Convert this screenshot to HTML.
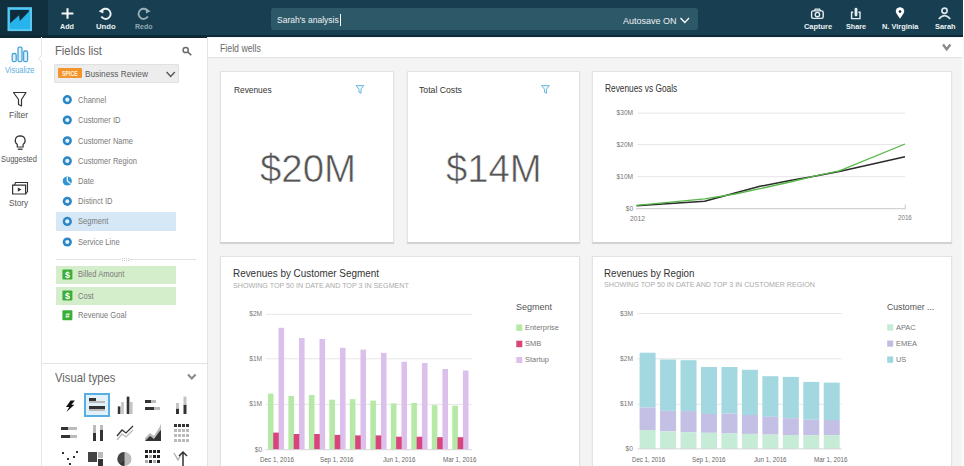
<!DOCTYPE html>
<html><head><meta charset="utf-8">
<style>
*{margin:0;padding:0;box-sizing:border-box}
html,body{width:964px;height:466px;overflow:hidden;background:#fff;font-family:"Liberation Sans",sans-serif}
.a{position:absolute;white-space:nowrap}
.b{position:absolute}
.card{position:absolute;background:#fff;border:1px solid #e3e3e3;border-bottom-color:#cfcfcf;box-shadow:0 1px 1px rgba(0,0,0,0.12)}
#t_n20,#t_n14{-webkit-text-stroke:0.6px #fff}
</style></head><body>
<!-- header -->
<div class="b" style="left:0;top:0;width:962.5px;height:34.5px;background:#173f51"></div>
<div class="b" style="left:0;top:34.5px;width:962.5px;height:3.4px;background:#0d2936"></div>
<div class="b" style="left:0;top:0;width:47.5px;height:34.5px;background:#10303f"></div>
<svg class="a" style="left:7px;top:6px" width="26" height="26" viewBox="0 0 26 26">
<rect x="1.5" y="2.2" width="22.5" height="21.9" fill="#27b3ec" stroke="#5cc8f0" stroke-width="2"/>
<polygon points="3.1,4.1 21.8,4.1 21.8,5.7 12.8,15.1 12.1,9.3 3.1,17.3" fill="#0e2c3b"/>
</svg>
<!-- add/undo/redo icons -->
<svg class="a" style="left:58px;top:5px" width="100" height="18" viewBox="58 5 100 18">
<path d="M67.5 8.2 V18.8 M61.6 13.5 H73.4" stroke="#f4f7f8" stroke-width="2.1" fill="none"/>
<path d="M101.2 11.2 A5.1 5.1 0 1 1 101.3 16.6" stroke="#eef2f4" stroke-width="1.9" fill="none"/>
<polygon points="98.6,11.3 103.6,8.2 103.2,13.6" fill="#eef2f4"/>
<g transform="translate(249.2 0) scale(-1 1)">
<path d="M101.2 11.2 A5.1 5.1 0 1 1 101.3 16.6" stroke="#9ab0b9" stroke-width="1.9" fill="none"/>
<polygon points="98.6,11.3 103.6,8.2 103.2,13.6" fill="#9ab0b9"/>
</g>
</svg>
<!-- title box -->
<div class="b" style="left:270.5px;top:8px;width:427.5px;height:22px;background:#2d5868;border-radius:3px"></div>
<div class="b" style="left:339.5px;top:14px;width:1px;height:12px;background:#fff"></div>
<svg class="a" style="left:679px;top:16px" width="12" height="9" viewBox="0 0 12 9">
<path d="M1.5 2 L5.8 6.5 L10 2" stroke="#fff" stroke-width="1.3" fill="none"/>
</svg>
<!-- right header icons -->
<svg class="a" style="left:800px;top:4px" width="160" height="18" viewBox="800 4 160 18">
<!-- capture -->
<rect x="811.6" y="10.9" width="11.6" height="7.5" rx="1.6" stroke="#e6edf0" stroke-width="1.4" fill="none"/>
<path d="M814.3 10.9 L815.3 9.2 H819.6 L820.6 10.9" stroke="#e6edf0" stroke-width="1.3" fill="none"/>
<circle cx="817.4" cy="14.6" r="2.2" stroke="#e6edf0" stroke-width="1.4" fill="none"/>
<!-- share -->
<path d="M853.2 12.3 H851.6 V18.6 H860 V12.3 H858.4" stroke="#e6edf0" stroke-width="1.4" fill="none"/>
<rect x="854.6" y="7.8" width="2.8" height="8.6" rx="1.4" fill="#e6edf0"/>
<!-- pin -->
<path d="M900 18.7 L896.5 13.6 A4.1 4.1 0 1 1 903.5 13.6 Z" fill="#fff"/>
<circle cx="900" cy="11.6" r="1.3" fill="#112f3e"/>
<!-- user -->
<circle cx="944.5" cy="10.8" r="2.6" stroke="#dbe4e8" stroke-width="1.7" fill="none"/>
<path d="M938.9 19 Q944.5 12.2 950.2 19" stroke="#dbe4e8" stroke-width="1.7" fill="none"/>
</svg>

<!-- left icon bar -->
<div class="b" style="left:41px;top:37px;width:1px;height:429px;background:#e6e6e6"></div>
<svg class="a" style="left:0;top:40px" width="44" height="170" viewBox="0 40 44 170">
<!-- visualize bars -->
<g stroke="#4aa3d8" stroke-width="1.3" fill="#dff0fa">
<rect x="12.2" y="53.5" width="4" height="8.2" rx="1.5"/>
<rect x="18" y="47.2" width="4" height="14.5" rx="1.5"/>
<rect x="23.6" y="51" width="4" height="10.7" rx="1.5"/>
</g>
<path d="M42 55 L38.5 58.5 L42 62" stroke="#ddd" stroke-width="1" fill="#fff"/>
<!-- filter -->
<path d="M13.5 92.5 H26 L21.5 99.5 V106 L18.5 104.5 V99.5 Z" stroke="#333" stroke-width="1.2" fill="none" stroke-linejoin="round"/>
<!-- bulb -->
<path d="M17.3 147 V144.5 C14 142 14.6 136 20.2 135.8 C25.8 136 26.4 142 23.1 144.5 V147 Z" stroke="#333" stroke-width="1.2" fill="none"/>
<path d="M17.8 149.2 H22.6" stroke="#333" stroke-width="1.3"/>
<!-- story -->
<path d="M12.6 185.2 H25.6 V194 H12.6 Z" stroke="#333" stroke-width="1.2" fill="none"/>
<path d="M14.5 185.2 L15.5 182.5 H27.5 V191.5 L25.6 194" stroke="#333" stroke-width="1.1" fill="none"/>
<path d="M17.8 187.5 L21.5 189.6 L17.8 191.7 Z" fill="#333"/>
</svg>

<!-- fields panel -->
<div class="b" style="left:207px;top:37px;width:1px;height:429px;background:#e3e3e3"></div>
<svg class="a" style="left:180px;top:45px" width="14" height="12" viewBox="180 45 14 12">
<circle cx="185.7" cy="50" r="2.6" stroke="#6a6a6a" stroke-width="1.5" fill="none"/>
<path d="M187.7 52 L191.3 55.2" stroke="#6a6a6a" stroke-width="1.6"/>
</svg>
<div class="b" style="left:53.5px;top:64px;width:125px;height:18.7px;background:#ededed;border:1px solid #e0e0e0;border-radius:1px"></div>
<div class="b" style="left:57.9px;top:67.9px;width:24.5px;height:10.3px;background:#f3952a;border-radius:1px"></div>
<span class="a" style="left:62px;top:69.6px;font-size:6.3px;line-height:7px;font-weight:bold;color:#fff3e0;transform:scaleX(0.83);transform-origin:left top">SPICE</span>
<svg class="a" style="left:164px;top:69px" width="14" height="10" viewBox="164 69 14 10">
<path d="M166.6 72 L170.7 76.4 L174.8 72" stroke="#5a5a5a" stroke-width="1.5" fill="none"/>
</svg>
<!-- highlight rows -->
<div class="b" style="left:55.7px;top:212.3px;width:120.3px;height:18.7px;background:#d6e8f6"></div>
<div class="b" style="left:55.7px;top:265.5px;width:120.6px;height:18px;background:#d4eecb"></div>
<div class="b" style="left:55.7px;top:286.6px;width:120.6px;height:18px;background:#d4eecb"></div>
<!-- field icons -->
<svg class="a" style="left:58px;top:90px" width="20" height="232" viewBox="58 90 20 232">
<g fill="#2b86c6">
<circle cx="67.3" cy="99.7" r="4.6"/><circle cx="67.3" cy="120" r="4.6"/><circle cx="67.3" cy="140.8" r="4.6"/>
<circle cx="67.3" cy="160.9" r="4.6"/><circle cx="67.3" cy="201.3" r="4.6"/>
<circle cx="67.3" cy="221.4" r="4.6"/><circle cx="67.3" cy="242" r="4.6"/>
</g>
<g fill="#e4f4fd">
<circle cx="67.3" cy="99.7" r="2.1"/><circle cx="67.3" cy="120" r="2.1"/><circle cx="67.3" cy="140.8" r="2.1"/>
<circle cx="67.3" cy="160.9" r="2.1"/><circle cx="67.3" cy="201.3" r="2"/>
<circle cx="67.3" cy="221.4" r="2.1"/><circle cx="67.3" cy="242" r="2.1"/>
</g>
<circle cx="67.3" cy="181" r="4.6" fill="#3194d3"/>
<path d="M67.3 181 V176.8 M67.3 181 L70.5 183.5" stroke="#fff" stroke-width="1.2"/>
<g fill="#3cae37">
<rect x="62.4" y="269.5" width="10" height="10" rx="1"/>
<rect x="62.4" y="290.6" width="10" height="10" rx="1"/>
<rect x="62.4" y="310.2" width="10" height="10" rx="1"/>
</g>
<text x="67.4" y="277.8" font-size="9" font-weight="bold" fill="#fff" text-anchor="middle" font-family="Liberation Sans">$</text>
<text x="67.4" y="298.9" font-size="9" font-weight="bold" fill="#fff" text-anchor="middle" font-family="Liberation Sans">$</text>
<text x="67.4" y="318.3" font-size="8" font-weight="bold" fill="#fff" text-anchor="middle" font-family="Liberation Sans">#</text>
</svg>
<!-- dashed separator -->
<div class="b" style="left:55.7px;top:259.3px;width:140px;height:1px;background:#e2e2e2"></div>
<div class="b" style="left:121px;top:257px;width:8px;height:5px;background:#fff"></div>
<div class="b" style="left:121.5px;top:257.5px;width:7px;height:1px;border-top:1px dotted #c8c8c8"></div>
<div class="b" style="left:121.5px;top:260px;width:7px;height:1px;border-top:1px dotted #c8c8c8"></div>
<!-- visual types separator -->
<div class="b" style="left:42px;top:363px;width:165px;height:1px;background:#e3e3e3"></div>
<svg class="a" style="left:186px;top:372px" width="12" height="10" viewBox="186 372 12 10">
<path d="M188 374.5 L191.8 378.5 L195.6 374.5" stroke="#888" stroke-width="2" fill="none"/>
</svg>
<!-- visual types icons -->
<div class="b" style="left:84px;top:392.6px;width:26.2px;height:24.8px;border:2px solid #56aee2;background:#e2f0f9"></div>
<svg class="a" style="left:55px;top:390px" width="145" height="76" viewBox="55 390 145 76">
<!-- row1 -->
<path d="M70.6 400.6 H74.9 L71.4 404.8 H74.4 L66.4 412 L69.2 406.9 H66 Z" fill="#111"/>
<rect x="89" y="398" width="7" height="3" fill="#333"/><rect x="89" y="401" width="16" height="2" fill="#bbb"/>
<rect x="89" y="406" width="16" height="3" fill="#333"/><rect x="89" y="409" width="16" height="2" fill="#bbb"/>
<rect x="117.8" y="406.4" width="2.6" height="7.6" fill="#333"/><rect x="121.2" y="402" width="2.6" height="12" fill="#c4c4c4"/><rect x="126.7" y="396.6" width="2.7" height="17.4" fill="#333"/><rect x="130" y="402" width="2.6" height="12" fill="#c4c4c4"/>
<rect x="145" y="400" width="6" height="3" fill="#333"/><rect x="151" y="400" width="5" height="3" fill="#bbb"/>
<rect x="145" y="407" width="9" height="3" fill="#333"/><rect x="154" y="407" width="6" height="3" fill="#bbb"/>
<rect x="176" y="408.5" width="3" height="5.5" fill="#333"/><rect x="176" y="403" width="3" height="5.5" fill="#c4c4c4"/>
<rect x="183.5" y="404.6" width="3" height="9.4" fill="#333"/><rect x="183.5" y="396.6" width="3" height="8" fill="#c4c4c4"/>
<!-- row2 -->
<rect x="61" y="427" width="7" height="3" fill="#333"/><rect x="68" y="427" width="9" height="3" fill="#bbb"/>
<rect x="61" y="435" width="9" height="3" fill="#333"/><rect x="70" y="435" width="7" height="3" fill="#bbb"/>
<rect x="93" y="433" width="3" height="8" fill="#333"/><rect x="93" y="425" width="3" height="8" fill="#bbb"/>
<rect x="100" y="430" width="3" height="11" fill="#333"/><rect x="100" y="425" width="3" height="5" fill="#bbb"/>
<path d="M117 436 L122 430 L126 433 L133 426" stroke="#333" stroke-width="1.3" fill="none"/>
<path d="M117 440 L122 434 L126 437 L133 430" stroke="#bbb" stroke-width="1.3" fill="none"/>
<path d="M145 441 L145 438 L150 433 L154 436 L159 428 L161 424 L161 441 Z" fill="#bbb"/>
<path d="M145 441 L150 436 L154 439 L159 432 L161 430 L161 441 Z" fill="#333"/>
<g fill="#333"><rect x="174" y="424" width="3" height="3"/><rect x="178" y="424" width="3" height="3"/><rect x="182" y="424" width="3" height="3"/><rect x="186" y="424" width="3" height="3"/></g>
<g fill="#bbb"><rect x="174" y="429" width="3" height="3"/><rect x="178" y="429" width="3" height="3"/><rect x="182" y="429" width="3" height="3"/><rect x="186" y="429" width="3" height="3"/>
<rect x="174" y="434" width="3" height="3"/><rect x="178" y="434" width="3" height="3"/><rect x="182" y="434" width="3" height="3"/><rect x="186" y="434" width="3" height="3"/>
<rect x="174" y="439" width="3" height="3"/><rect x="178" y="439" width="3" height="3"/><rect x="182" y="439" width="3" height="3"/><rect x="186" y="439" width="3" height="3"/></g>
<!-- row3 -->
<g fill="#333"><rect x="62" y="452" width="2" height="2"/><rect x="67" y="458" width="2" height="2"/><rect x="73" y="456" width="2" height="2"/><rect x="76" y="451" width="2" height="2"/><rect x="69" y="463" width="2" height="2"/></g>
<rect x="88" y="452" width="9" height="10" fill="#444"/><rect x="98" y="452" width="5" height="6" fill="#bbb"/><rect x="98" y="459" width="5" height="7" fill="#333"/>
<circle cx="124.5" cy="459" r="7" fill="#bbb"/><path d="M124.5 459 V452 A7 7 0 0 0 119 463.4 Z" fill="#444"/><path d="M124.5 459 L119 463.4 A7 7 0 0 0 124.5 466 Z" fill="#333"/>
<g fill="#222"><rect x="145" y="450" width="3" height="3"/><rect x="149" y="450" width="3" height="3"/><rect x="153" y="450" width="3" height="3"/><rect x="157" y="450" width="3" height="3"/>
<rect x="145" y="455" width="3" height="3"/><rect x="153" y="455" width="3" height="3"/><rect x="157" y="455" width="3" height="3"/>
<rect x="149" y="460" width="3" height="3"/><rect x="157" y="460" width="3" height="3"/></g>
<g fill="#aaa"><rect x="149" y="455" width="3" height="3"/><rect x="145" y="460" width="3" height="3"/><rect x="153" y="460" width="3" height="3"/></g>
<path d="M174 453 L178 460 L182 453" stroke="#aaa" stroke-width="1.2" fill="none"/>
<path d="M183 466 V452 M179 456 L183 452 L187 456" stroke="#333" stroke-width="1.5" fill="none"/>
</svg>

<!-- main area -->
<div class="b" style="left:208px;top:37px;width:753.5px;height:429px;background:#f4f4f4"></div>
<div class="b" style="left:961.5px;top:37px;width:3px;height:429px;background:#fbfbfb"></div>
<div class="b" style="left:208px;top:37.9px;width:753.5px;height:20px;background:#fff;border-bottom:1px solid #e3e3e3"></div>
<svg class="a" style="left:940px;top:42px" width="14" height="11" viewBox="940 42 14 11">
<path d="M943 44.5 L946.7 49.3 L950.4 44.5" stroke="#8a8a8a" stroke-width="2.4" fill="none"/>
</svg>
<div class="card" style="left:220px;top:70.8px;width:173.5px;height:172px"></div>
<div class="card" style="left:406.6px;top:70.8px;width:173.4px;height:172px"></div>
<div class="card" style="left:591.8px;top:70.8px;width:359.8px;height:172.5px"></div>
<div class="card" style="left:220px;top:255.8px;width:360.3px;height:220px"></div>
<div class="card" style="left:591.8px;top:255.8px;width:359.8px;height:220px"></div>
<!-- filter icons in cards -->
<svg class="a" style="left:354px;top:84px" width="12" height="11" viewBox="354 84 12 11">
<path d="M356 85.6 H363.8 L361 89.3 V93.3 L359 92.3 V89.3 Z" stroke="#6cb9e0" stroke-width="1" fill="#eef7fc"/>
</svg>
<svg class="a" style="left:540px;top:84px" width="12" height="11" viewBox="540 84 12 11">
<path d="M541.5 85.6 H549.3 L546.5 89.3 V93.3 L544.5 92.3 V89.3 Z" stroke="#6cb9e0" stroke-width="1" fill="#eef7fc"/>
</svg>
<!-- line chart -->
<svg class="a" style="left:592px;top:100px" width="330" height="125" viewBox="592 100 330 125">
<g stroke="#e6e6e6" stroke-width="1">
<path d="M637.5 113.2 H905 M637.5 144.6 H905 M637.5 176.7 H905"/>
</g>
<path d="M636 208.6 H905.3 V204.5" stroke="#d2d2d2" stroke-width="1.2" fill="none"/>
<polyline points="636.5,205.8 704.6,201.2 735,193 760,186.3 790,180.6 814.4,176.2 839.3,171.5 905,156.8" stroke="#2b2b2b" stroke-width="1.5" fill="none" stroke-linejoin="round"/>
<polyline points="636.5,205.4 704.6,198.9 735,194 760,188.7 790,182 814.4,176.2 839.3,170.8 905,144" stroke="#56b847" stroke-width="1.3" fill="none" stroke-linejoin="round"/>
</svg>
<!-- segment bar chart -->
<svg class="a" style="left:230px;top:300px" width="350" height="166" viewBox="230 300 350 166">
<g stroke="#e6e6e6" stroke-width="1"><path d="M265.6 314.3 H472 M265.6 358.8 H472 M265.6 404.4 H472"/></g>
<g id="segbars"><rect x="267.90" y="393.6" width="5.6" height="56.10" fill="#b5e9a5"/><rect x="278.50" y="327.8" width="5.6" height="121.90" fill="#dcc0ec"/><rect x="273.20" y="432.6" width="5.6" height="17.10" fill="#d8457c"/><rect x="288.39" y="396" width="5.6" height="53.70" fill="#b5e9a5"/><rect x="298.99" y="338" width="5.6" height="111.70" fill="#dcc0ec"/><rect x="293.69" y="434" width="5.6" height="15.70" fill="#d8457c"/><rect x="308.88" y="395" width="5.6" height="54.70" fill="#b5e9a5"/><rect x="319.48" y="339" width="5.6" height="110.70" fill="#dcc0ec"/><rect x="314.18" y="434" width="5.6" height="15.70" fill="#d8457c"/><rect x="329.37" y="399.7" width="5.6" height="50.00" fill="#b5e9a5"/><rect x="339.97" y="347.8" width="5.6" height="101.90" fill="#dcc0ec"/><rect x="334.67" y="434.9" width="5.6" height="14.80" fill="#d8457c"/><rect x="349.86" y="399.2" width="5.6" height="50.50" fill="#b5e9a5"/><rect x="360.46" y="349.6" width="5.6" height="100.10" fill="#dcc0ec"/><rect x="355.16" y="435.4" width="5.6" height="14.30" fill="#d8457c"/><rect x="370.35" y="400.6" width="5.6" height="49.10" fill="#b5e9a5"/><rect x="380.95" y="352.9" width="5.6" height="96.80" fill="#dcc0ec"/><rect x="375.65" y="435.4" width="5.6" height="14.30" fill="#d8457c"/><rect x="390.84" y="403.4" width="5.6" height="46.30" fill="#b5e9a5"/><rect x="401.44" y="361.7" width="5.6" height="88.00" fill="#dcc0ec"/><rect x="396.14" y="436.7" width="5.6" height="13.00" fill="#d8457c"/><rect x="411.33" y="403" width="5.6" height="46.70" fill="#b5e9a5"/><rect x="421.93" y="363" width="5.6" height="86.70" fill="#dcc0ec"/><rect x="416.63" y="436.7" width="5.6" height="13.00" fill="#d8457c"/><rect x="431.82" y="405.2" width="5.6" height="44.50" fill="#b5e9a5"/><rect x="442.42" y="369" width="5.6" height="80.70" fill="#dcc0ec"/><rect x="437.12" y="437.2" width="5.6" height="12.50" fill="#d8457c"/><rect x="452.31" y="405.7" width="5.6" height="44.00" fill="#b5e9a5"/><rect x="462.91" y="370.5" width="5.6" height="79.20" fill="#dcc0ec"/><rect x="457.61" y="437.2" width="5.6" height="12.50" fill="#d8457c"/></g>
<path d="M265.6 449.7 H472" stroke="#d6d6d6" stroke-width="1"/>
<rect x="516.3" y="324.4" width="6" height="6.5" fill="#b5e9a5"/>
<rect x="516.3" y="340.7" width="6" height="6.5" fill="#d8457c"/>
<rect x="516.3" y="357" width="6" height="6" fill="#dcc0ec"/>
</svg>
<!-- region bar chart -->
<svg class="a" style="left:600px;top:300px" width="350" height="166" viewBox="600 300 350 166">
<g stroke="#e6e6e6" stroke-width="1"><path d="M637.3 313.5 H841.5 M637.3 358.8 H841.5 M637.3 404.3 H841.5"/></g>
<g id="regbars"><rect x="639.60" y="352.7" width="16" height="54.80" fill="#a3d8e0"/><rect x="639.60" y="407.5" width="16" height="22.50" fill="#c4bfe4"/><rect x="639.60" y="430" width="16" height="18.90" fill="#c6ecd8"/><rect x="660.06" y="359.5" width="16" height="51.30" fill="#a3d8e0"/><rect x="660.06" y="410.8" width="16" height="20.60" fill="#c4bfe4"/><rect x="660.06" y="431.4" width="16" height="17.50" fill="#c6ecd8"/><rect x="680.52" y="360.2" width="16" height="50.90" fill="#a3d8e0"/><rect x="680.52" y="411.1" width="16" height="21.00" fill="#c4bfe4"/><rect x="680.52" y="432.1" width="16" height="16.80" fill="#c6ecd8"/><rect x="700.98" y="367" width="16" height="47.00" fill="#a3d8e0"/><rect x="700.98" y="414" width="16" height="18.80" fill="#c4bfe4"/><rect x="700.98" y="432.8" width="16" height="16.10" fill="#c6ecd8"/><rect x="721.44" y="367" width="16" height="46.60" fill="#a3d8e0"/><rect x="721.44" y="413.6" width="16" height="19.90" fill="#c4bfe4"/><rect x="721.44" y="433.5" width="16" height="15.40" fill="#c6ecd8"/><rect x="741.90" y="369.8" width="16" height="45.20" fill="#a3d8e0"/><rect x="741.90" y="415" width="16" height="18.90" fill="#c4bfe4"/><rect x="741.90" y="433.9" width="16" height="15.00" fill="#c6ecd8"/><rect x="762.36" y="376.2" width="16" height="40.60" fill="#a3d8e0"/><rect x="762.36" y="416.8" width="16" height="17.80" fill="#c4bfe4"/><rect x="762.36" y="434.6" width="16" height="14.30" fill="#c6ecd8"/><rect x="782.82" y="376.9" width="16" height="41.30" fill="#a3d8e0"/><rect x="782.82" y="418.2" width="16" height="16.80" fill="#c4bfe4"/><rect x="782.82" y="435" width="16" height="13.90" fill="#c6ecd8"/><rect x="803.28" y="381.9" width="16" height="37.80" fill="#a3d8e0"/><rect x="803.28" y="419.7" width="16" height="15.60" fill="#c4bfe4"/><rect x="803.28" y="435.3" width="16" height="13.60" fill="#c6ecd8"/><rect x="823.74" y="382.6" width="16" height="37.40" fill="#a3d8e0"/><rect x="823.74" y="420" width="16" height="15.30" fill="#c4bfe4"/><rect x="823.74" y="435.3" width="16" height="13.60" fill="#c6ecd8"/></g>
<path d="M637.3 448.9 H841.5" stroke="#d6d6d6" stroke-width="1"/>
<rect x="887.2" y="324.3" width="6" height="6.3" fill="#c3ebd5"/>
<rect x="887.2" y="340.6" width="6" height="6.1" fill="#c1bce2"/>
<rect x="887.2" y="356.5" width="6" height="6.3" fill="#9fd6df"/>
</svg>
<span class="a" id="t_add" style="top:23.03px;font-size:8.0px;line-height:8.0px;color:#eef2f4;font-weight:bold;left:59.90px;transform:scaleX(0.8980);transform-origin:left top;">Add</span>
<span class="a" id="t_undo" style="top:23.03px;font-size:8.0px;line-height:8.0px;color:#eef2f4;font-weight:bold;left:95.70px;transform:scaleX(0.9597);transform-origin:left top;">Undo</span>
<span class="a" id="t_redo" style="top:23.03px;font-size:8.0px;line-height:8.0px;color:#92a9b3;font-weight:bold;left:134.70px;transform:scaleX(0.8781);transform-origin:left top;">Redo</span>
<span class="a" id="t_title" style="top:15.07px;font-size:9.6px;line-height:9.6px;color:#eef2f4;left:276.70px;transform:scaleX(0.8867);transform-origin:left top;">Sarah's analysis</span>
<span class="a" id="t_autosave" style="top:15.60px;font-size:9.8px;line-height:9.8px;color:#eef2f4;left:623.10px;transform:scaleX(0.9186);transform-origin:left top;">Autosave ON</span>
<span class="a" id="t_capture" style="top:23.03px;font-size:8.0px;line-height:8.0px;color:#eef2f4;font-weight:bold;left:803.70px;transform:scaleX(0.9292);transform-origin:left top;">Capture</span>
<span class="a" id="t_share" style="top:23.03px;font-size:8.0px;line-height:8.0px;color:#eef2f4;font-weight:bold;left:845.70px;transform:scaleX(0.9030);transform-origin:left top;">Share</span>
<span class="a" id="t_nva" style="top:23.03px;font-size:8.0px;line-height:8.0px;color:#eef2f4;font-weight:bold;left:881.70px;transform:scaleX(0.9231);transform-origin:left top;">N. Virginia</span>
<span class="a" id="t_sarah" style="top:23.03px;font-size:8.0px;line-height:8.0px;color:#eef2f4;font-weight:bold;left:934.50px;transform:scaleX(0.9215);transform-origin:left top;">Sarah</span>
<span class="a" id="t_vis" style="top:67.36px;font-size:8.2px;line-height:8.2px;color:#5aaede;left:5.30px;transform:scaleX(0.9040);transform-origin:left top;">Visualize</span>
<span class="a" id="t_filt" style="top:111.86px;font-size:8.2px;line-height:8.2px;color:#555;left:8.90px;transform:scaleX(1.0486);transform-origin:left top;">Filter</span>
<span class="a" id="t_sugg" style="top:156.06px;font-size:8.2px;line-height:8.2px;color:#555;left:0.70px;transform:scaleX(0.9169);transform-origin:left top;">Suggested</span>
<span class="a" id="t_story" style="top:199.56px;font-size:8.2px;line-height:8.2px;color:#555;left:8.90px;transform:scaleX(0.9963);transform-origin:left top;">Story</span>
<span class="a" id="t_fl" style="top:44.63px;font-size:12.6px;line-height:12.6px;color:#666;left:54.50px;transform:scaleX(0.8936);transform-origin:left top;">Fields list</span>
<span class="a" id="t_br" style="top:68.90px;font-size:9.8px;line-height:9.8px;color:#5a5a5a;left:84.50px;transform:scaleX(0.8425);transform-origin:left top;">Business Review</span>
<span class="a" id="t_f0" style="top:95.62px;font-size:8.6px;line-height:8.6px;color:#7a7a7a;left:77.60px;transform:scaleX(0.8800);transform-origin:left top;">Channel</span>
<span class="a" id="t_f1" style="top:115.92px;font-size:8.6px;line-height:8.6px;color:#7a7a7a;left:77.60px;transform:scaleX(0.8800);transform-origin:left top;">Customer ID</span>
<span class="a" id="t_f2" style="top:136.72px;font-size:8.6px;line-height:8.6px;color:#7a7a7a;left:77.60px;transform:scaleX(0.8800);transform-origin:left top;">Customer Name</span>
<span class="a" id="t_f3" style="top:156.82px;font-size:8.6px;line-height:8.6px;color:#7a7a7a;left:77.60px;transform:scaleX(0.8800);transform-origin:left top;">Customer Region</span>
<span class="a" id="t_f4" style="top:176.92px;font-size:8.6px;line-height:8.6px;color:#7a7a7a;left:77.60px;transform:scaleX(0.8800);transform-origin:left top;">Date</span>
<span class="a" id="t_f5" style="top:197.22px;font-size:8.6px;line-height:8.6px;color:#7a7a7a;left:77.60px;transform:scaleX(0.8800);transform-origin:left top;">Distinct ID</span>
<span class="a" id="t_f6" style="top:217.32px;font-size:8.6px;line-height:8.6px;color:#7a7a7a;left:77.60px;transform:scaleX(0.8800);transform-origin:left top;">Segment</span>
<span class="a" id="t_f7" style="top:237.92px;font-size:8.6px;line-height:8.6px;color:#7a7a7a;left:77.60px;transform:scaleX(0.8800);transform-origin:left top;">Service Line</span>
<span class="a" id="t_f8" style="top:270.42px;font-size:8.6px;line-height:8.6px;color:#7a7a7a;left:77.60px;transform:scaleX(0.8800);transform-origin:left top;">Billed Amount</span>
<span class="a" id="t_f9" style="top:291.52px;font-size:8.6px;line-height:8.6px;color:#7a7a7a;left:77.60px;transform:scaleX(0.8800);transform-origin:left top;">Cost</span>
<span class="a" id="t_f10" style="top:311.12px;font-size:8.6px;line-height:8.6px;color:#7a7a7a;left:77.60px;transform:scaleX(0.8800);transform-origin:left top;">Revenue Goal</span>
<span class="a" id="t_vt" style="top:371.50px;font-size:12.4px;line-height:12.4px;color:#666;left:54.70px;transform:scaleX(0.9070);transform-origin:left top;">Visual types</span>
<span class="a" id="t_fwl" style="top:43.80px;font-size:10.4px;line-height:10.4px;color:#6a6a6a;left:219.50px;transform:scaleX(0.8431);transform-origin:left top;">Field wells</span>
<span class="a" id="t_rev" style="top:85.30px;font-size:9.8px;line-height:9.8px;color:#333;left:233.50px;transform:scaleX(0.8514);transform-origin:left top;">Revenues</span>
<span class="a" id="t_tc" style="top:85.30px;font-size:9.8px;line-height:9.8px;color:#333;left:418.90px;transform:scaleX(0.8850);transform-origin:left top;">Total Costs</span>
<span class="a" id="t_rvg" style="top:83.77px;font-size:10.2px;line-height:10.2px;color:#333;left:604.60px;transform:scaleX(0.8180);transform-origin:left top;">Revenues vs Goals</span>
<span class="a" id="t_n20" style="top:148.76px;font-size:39.5px;line-height:39.5px;color:#555;left:259.90px;transform:scaleX(0.9723);transform-origin:left top;">$20M</span>
<span class="a" id="t_n14" style="top:148.76px;font-size:39.5px;line-height:39.5px;color:#555;left:445.70px;transform:scaleX(0.9691);transform-origin:left top;">$14M</span>
<span class="a" id="t_rbs" style="top:267.82px;font-size:11.2px;line-height:11.2px;color:#333;left:233.00px;transform:scaleX(0.8859);transform-origin:left top;">Revenues by Customer Segment</span>
<span class="a" id="t_rbss" style="top:281.77px;font-size:7.6px;line-height:7.6px;color:#aaa;left:233.10px;transform:scaleX(0.9394);transform-origin:left top;">SHOWING TOP 50 IN DATE AND TOP 3 IN SEGMENT</span>
<span class="a" id="t_rbr" style="top:268.12px;font-size:11.2px;line-height:11.2px;color:#333;left:603.70px;transform:scaleX(0.8701);transform-origin:left top;">Revenues by Region</span>
<span class="a" id="t_rbrs" style="top:281.47px;font-size:7.6px;line-height:7.6px;color:#aaa;left:603.70px;transform:scaleX(0.9369);transform-origin:left top;">SHOWING TOP 50 IN DATE AND TOP 3 IN CUSTOMER REGION</span>
<span class="a" id="t_seg" style="top:301.64px;font-size:9.4px;line-height:9.4px;color:#555;left:515.80px;transform:scaleX(0.9625);transform-origin:left top;">Segment</span>
<span class="a" id="t_cust" style="top:301.64px;font-size:9.4px;line-height:9.4px;color:#555;left:887.10px;transform:scaleX(0.9262);transform-origin:left top;">Customer ...</span>
<span class="a" id="t_lg0" style="top:323.63px;font-size:8.0px;line-height:8.0px;color:#777;left:524.60px;transform:scaleX(0.9300);transform-origin:left top;">Enterprise</span>
<span class="a" id="t_lg1" style="top:339.93px;font-size:8.0px;line-height:8.0px;color:#777;left:524.60px;transform:scaleX(0.9300);transform-origin:left top;">SMB</span>
<span class="a" id="t_lg2" style="top:356.03px;font-size:8.0px;line-height:8.0px;color:#777;left:524.60px;transform:scaleX(0.9300);transform-origin:left top;">Startup</span>
<span class="a" id="t_lr0" style="top:323.53px;font-size:8.0px;line-height:8.0px;color:#777;left:895.70px;transform:scaleX(0.9300);transform-origin:left top;">APAC</span>
<span class="a" id="t_lr1" style="top:339.63px;font-size:8.0px;line-height:8.0px;color:#777;left:895.70px;transform:scaleX(0.9300);transform-origin:left top;">EMEA</span>
<span class="a" id="t_lr2" style="top:355.63px;font-size:8.0px;line-height:8.0px;color:#777;left:895.70px;transform:scaleX(0.9300);transform-origin:left top;">US</span>
<span class="a" id="t_la0" style="top:110.21px;font-size:6.6px;line-height:6.6px;color:#777;right:330.90px;">$30M</span>
<span class="a" id="t_la1" style="top:141.91px;font-size:6.6px;line-height:6.6px;color:#777;right:330.90px;">$20M</span>
<span class="a" id="t_la2" style="top:173.81px;font-size:6.6px;line-height:6.6px;color:#777;right:330.90px;">$10M</span>
<span class="a" id="t_la3" style="top:205.91px;font-size:6.6px;line-height:6.6px;color:#777;right:330.90px;">$0</span>
<span class="a" id="t_y2012" style="top:215.71px;font-size:6.6px;line-height:6.6px;color:#777;left:629.50px;transform:scaleX(1.0252);transform-origin:left top;">2012</span>
<span class="a" id="t_y2016" style="top:214.81px;font-size:6.6px;line-height:6.6px;color:#777;left:898.10px;transform:scaleX(0.9403);transform-origin:left top;">2016</span>
<span class="a" id="t_sa0" style="top:311.31px;font-size:6.6px;line-height:6.6px;color:#777;right:701.90px;">$2M</span>
<span class="a" id="t_sa1" style="top:355.81px;font-size:6.6px;line-height:6.6px;color:#777;right:701.90px;">$1M</span>
<span class="a" id="t_sa2" style="top:401.41px;font-size:6.6px;line-height:6.6px;color:#777;right:701.90px;">$1M</span>
<span class="a" id="t_sa3" style="top:446.71px;font-size:6.6px;line-height:6.6px;color:#777;right:701.90px;">$0</span>
<span class="a" id="t_sx0" style="top:455.71px;font-size:7.2px;line-height:7.2px;color:#666;left:259.50px;transform:scaleX(0.8746);transform-origin:left top;">Dec 1, 2016</span>
<span class="a" id="t_sx1" style="top:455.71px;font-size:7.2px;line-height:7.2px;color:#666;left:319.90px;transform:scaleX(0.8664);transform-origin:left top;">Sep 1, 2016</span>
<span class="a" id="t_sx2" style="top:455.71px;font-size:7.2px;line-height:7.2px;color:#666;left:382.50px;transform:scaleX(0.8621);transform-origin:left top;">Jun 1, 2016</span>
<span class="a" id="t_sx3" style="top:455.71px;font-size:7.2px;line-height:7.2px;color:#666;left:442.90px;transform:scaleX(0.8708);transform-origin:left top;">Mar 1, 2016</span>
<span class="a" id="t_ra0" style="top:310.51px;font-size:6.6px;line-height:6.6px;color:#777;right:331.10px;">$3M</span>
<span class="a" id="t_ra1" style="top:355.81px;font-size:6.6px;line-height:6.6px;color:#777;right:331.10px;">$2M</span>
<span class="a" id="t_ra2" style="top:401.31px;font-size:6.6px;line-height:6.6px;color:#777;right:331.10px;">$1M</span>
<span class="a" id="t_ra3" style="top:445.91px;font-size:6.6px;line-height:6.6px;color:#777;right:331.10px;">$0</span>
<span class="a" id="t_rx0" style="top:455.71px;font-size:7.2px;line-height:7.2px;color:#666;left:631.50px;transform:scaleX(0.8536);transform-origin:left top;">Dec 1, 2016</span>
<span class="a" id="t_rx1" style="top:455.71px;font-size:7.2px;line-height:7.2px;color:#666;left:691.60px;transform:scaleX(0.8664);transform-origin:left top;">Sep 1, 2016</span>
<span class="a" id="t_rx2" style="top:455.71px;font-size:7.2px;line-height:7.2px;color:#666;left:754.10px;transform:scaleX(0.8675);transform-origin:left top;">Jun 1, 2016</span>
<span class="a" id="t_rx3" style="top:455.71px;font-size:7.2px;line-height:7.2px;color:#666;left:814.30px;transform:scaleX(0.8760);transform-origin:left top;">Mar 1, 2016</span>
</body></html>
